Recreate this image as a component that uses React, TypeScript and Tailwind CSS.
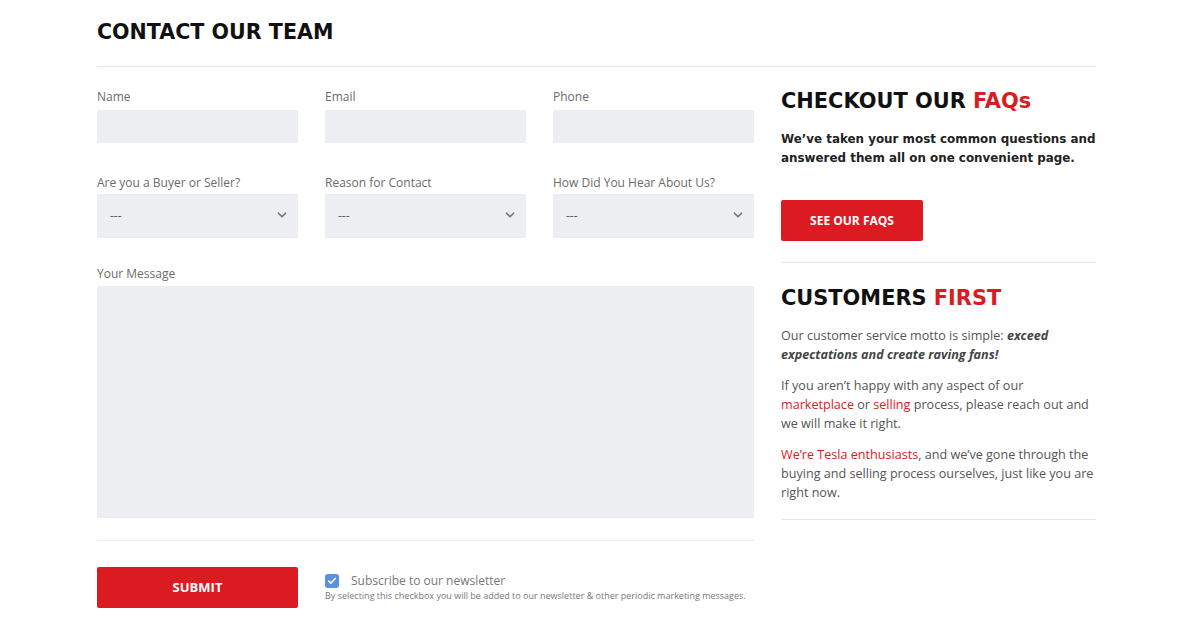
import { ChevronDown, Check } from "lucide-react";

const heading = "font-['DejaVu_Sans',sans-serif] font-bold uppercase text-[#111]";
const body = "font-['Open_Sans',sans-serif]";
const labelCls = `${body} text-[12px] leading-[16px] text-[#6b6b6b]`;

function Field({ label }: { label: string }) {
  return (
    <label className="flex flex-col">
      <span className={`${labelCls} mb-[5px]`}>{label}</span>
      <input className="h-[33px] w-full bg-[#eceef2] outline-none" />
    </label>
  );
}

function SelectField({ label }: { label: string }) {
  return (
    <label className="flex flex-col">
      <span className={`${labelCls} mb-[3px]`}>{label}</span>
      <div className="relative flex h-[44px] items-center bg-[#eceef2] px-[13px]">
        <span className={`${body} text-[12px] text-[#555]`}>---</span>
        <ChevronDown className="absolute right-[9px] top-[14px] h-[14px] w-[14px] text-[#777]" strokeWidth={3} />
      </div>
    </label>
  );
}

export default function App() {
  return (
    <div className="min-h-[630px] w-[1200px] bg-white">
      <div className="ml-[97px] w-[999px] pt-[18px]">
        <h1 className={`${heading} text-[20.6px] leading-[28px]`}>Contact Our Team</h1>
        <div className="mt-[20px] h-px bg-[#e8e8e8]" />

        <div className="mt-[22px] grid grid-cols-[657px_315px] gap-[27px]">
          {/* form */}
          <div>
            <div className="grid grid-cols-3 gap-x-[27px]">
              <Field label="Name" />
              <Field label="Email" />
              <Field label="Phone" />
            </div>
            <div className="mt-[32px] grid grid-cols-3 gap-x-[27px]">
              <SelectField label="Are you a Buyer or Seller?" />
              <SelectField label="Reason for Contact" />
              <SelectField label="How Did You Hear About Us?" />
            </div>
            <label className="mt-[28px] flex flex-col">
              <span className={`${labelCls} mb-[4px]`}>Your Message</span>
              <textarea className="h-[232px] w-full resize-none bg-[#eceef2] outline-none" />
            </label>
            <div className="mt-[22px] h-px bg-[#ececec]" />
            <div className="mt-[26px] flex items-start gap-[27px]">
              <button className={`${body} h-[41px] w-[201px] shrink-0 rounded-[2px] bg-[#dc1a22] text-[13px] font-bold uppercase text-white`}>
                Submit
              </button>
              <div className="pt-[6px]">
                <div className="flex items-center gap-[12px]">
                  <span className="flex h-[14px] w-[14px] items-center justify-center rounded-[3px] bg-[#5b8fe0]">
                    <Check className="h-[10px] w-[10px] text-white" strokeWidth={4} />
                  </span>
                  <span className={`${body} text-[12px] leading-[16px] text-[#777]`}>Subscribe to our newsletter</span>
                </div>
                <p className={`${body} mt-[1px] text-[9px] leading-[12px] text-[#777]`}>
                  By selecting this checkbox you will be added to our newsletter &amp; other periodic marketing messages.
                </p>
              </div>
            </div>
          </div>

          {/* sidebar */}
          <aside className="-mt-[2px]">
            <h2 className={`${heading} text-[20.9px] leading-[28px]`}>
              Checkout our <span className="normal-case text-[#dc1a22]">FAQs</span>
            </h2>
            <p className="mt-[15px] w-[318px] font-['DejaVu_Sans',sans-serif] text-[11.9px] font-bold leading-[19px] text-[#222]">
              We’ve taken your most common questions and answered them all on one convenient page.
            </p>
            <button className={`${body} mt-[32px] h-[41px] w-[142px] rounded-[2px] bg-[#dc1a22] text-[12px] font-bold uppercase text-white`}>
              See our FAQs
            </button>
            <div className="mt-[21px] h-px bg-[#e8e8e8]" />
            <h2 className={`${heading} mt-[21px] text-[20.9px] leading-[28px]`}>
              Customers <span className="text-[#dc1a22]">First</span>
            </h2>
            <div className={`${body} mt-[14px] space-y-[12px] text-[12.6px] leading-[19px] text-[#555]`}>
              <p>
                Our customer service motto is simple: <b className="italic text-[#444]">exceed expectations and create raving fans!</b>
              </p>
              <p>
                If you aren’t happy with any aspect of our <span className="text-[#dc1a22]">marketplace</span> or{" "}
                <span className="text-[#dc1a22]">selling</span> process, please reach out and we will make it right.
              </p>
              <p>
                <span className="text-[#dc1a22]">We’re Tesla enthusiasts</span>, and we’ve gone through the buying and selling process ourselves, just like you are right now.
              </p>
            </div>
            <div className="mt-[17px] h-px bg-[#e8e8e8]" />
          </aside>
        </div>
      </div>
    </div>
  );
}
